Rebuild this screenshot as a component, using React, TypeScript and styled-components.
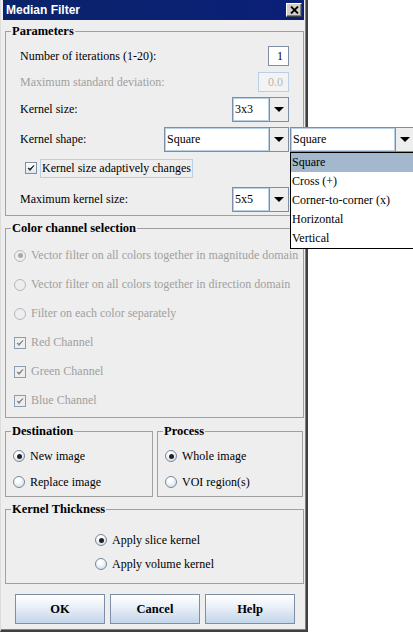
import React from "react";
import styled, { createGlobalStyle } from "styled-components";

const serif = `"Liberation Serif", "Times New Roman", serif`;
const steel = "#7d8fa6";
const paleBlue = "#b8cfe5";
const disabledText = "#a0a0a0";

const GlobalStyle = createGlobalStyle`
  html, body {
    margin: 0;
    padding: 0;
    background: #ffffff;
  }
  body {
    font-family: ${serif};
    font-size: 12px;
    color: #000;
  }
`;

const Page = styled.div`
  width: 413px;
  height: 632px;
  overflow: hidden;
  background: #ffffff;
`;

const Window = styled.div`
  box-sizing: border-box;
  width: 308px;
  height: 632px;
  display: flex;
  flex-direction: column;
  background: #eeeeee;
  border-left: 1px solid #dcdcdc;
  border-right: 2px solid #404040;
  border-bottom: 2px solid #404040;
  box-shadow: inset -1px 0 0 #808080, inset 0 -1px 0 #808080;
`;

const TitleBar = styled.div`
  height: 20px;
  margin: 0 2px 0 2px;
  padding: 0 2px 0 3px;
  display: flex;
  align-items: center;
  justify-content: space-between;
  background: linear-gradient(90deg, #0a246a, #0b1f78);
  color: #fff;
  font: bold 12px "Liberation Sans", Arial, sans-serif;
`;

const CloseButton = styled.div`
  box-sizing: border-box;
  width: 16px;
  height: 14px;
  display: flex;
  align-items: center;
  justify-content: center;
  background: #d4d0c8;
  border: 1px solid;
  border-color: #ffffff #404040 #404040 #ffffff;
  box-shadow: inset -1px -1px 0 #808080;
`;

const Content = styled.div`
  flex: 1;
  display: flex;
  flex-direction: column;
  padding: 4px 2px 0 4px;
`;

const Group = styled.fieldset<{ $mt?: number }>`
  margin: ${(p) => p.$mt ?? 0}px 0 0 0;
  padding: 0;
  min-width: 0;
  border: 1px solid #a0a0a0;
`;

const Legend = styled.legend`
  margin-left: 5px;
  padding: 0 1px;
  font: bold 12.5px ${serif};
  line-height: 14px;
`;

const GroupBody = styled.div<{ $pt: number; $pb: number; $px: number; $center?: boolean }>`
  display: flex;
  flex-direction: column;
  align-items: ${(p) => (p.$center ? "center" : "stretch")};
  padding: ${(p) => p.$pt}px ${(p) => p.$px}px ${(p) => p.$pb}px;
`;

const Row = styled.div<{ $h: number; $mt?: number }>`
  display: flex;
  align-items: center;
  justify-content: space-between;
  height: ${(p) => p.$h}px;
  margin-top: ${(p) => p.$mt ?? 0}px;
`;

const OptionRow = styled.div<{ $h: number }>`
  display: flex;
  align-items: center;
  gap: 5px;
  height: ${(p) => p.$h}px;
`;

const Label = styled.span<{ $disabled?: boolean }>`
  font-size: 12px;
  white-space: nowrap;
  color: ${(p) => (p.$disabled ? disabledText : "#000")};
`;

const Field = styled.div<{ $w: number; $disabled?: boolean }>`
  box-sizing: border-box;
  width: ${(p) => p.$w}px;
  height: 20px;
  display: flex;
  align-items: center;
  justify-content: flex-end;
  padding-right: 5px;
  border: 1px solid ${(p) => (p.$disabled ? paleBlue : steel)};
  background: ${(p) => (p.$disabled ? "#f3f3f3" : "#ffffff")};
  color: ${(p) => (p.$disabled ? "#b4b4b4" : "#000")};
  font-size: 12px;
`;

const ComboWrap = styled.div`
  position: relative;
  display: flex;
`;

const Combo = styled.div<{ $w: number }>`
  box-sizing: border-box;
  width: ${(p) => p.$w}px;
  height: 25px;
  display: flex;
  flex-shrink: 0;
  border: 1px solid ${steel};
  background: #fff;
`;

const ComboValue = styled.div`
  flex: 1;
  display: flex;
  align-items: center;
  padding-left: 1px;
  border: 1px solid ${paleBlue};
  font-size: 12px;
  white-space: nowrap;
  overflow: hidden;
`;

const ComboArrow = styled.div`
  width: 18px;
  display: flex;
  align-items: center;
  justify-content: center;
  background: #eeeeee;
  border-left: 1px solid ${steel};

  &::after {
    content: "";
    border-left: 5px solid transparent;
    border-right: 5px solid transparent;
    border-top: 5px solid #000;
  }
`;

const Popup = styled.div`
  position: absolute;
  top: 0;
  left: calc(100% + 1px);
  display: flex;
  flex-direction: column;
  z-index: 5;
`;

const PopupList = styled.div`
  box-sizing: border-box;
  width: 125px;
  border: 1px solid #000;
  background: #fff;
`;

const PopupItem = styled.div<{ $selected?: boolean }>`
  height: 19px;
  display: flex;
  align-items: center;
  padding-left: 1px;
  font-size: 12px;
  white-space: nowrap;
  background: ${(p) => (p.$selected ? "#a3b8cc" : "transparent")};
`;

const CheckRow = styled.div<{ $h: number; $indent: number; $mt?: number }>`
  display: flex;
  align-items: center;
  gap: 3px;
  height: ${(p) => p.$h}px;
  margin-top: ${(p) => p.$mt ?? 0}px;
  padding-left: ${(p) => p.$indent}px;
`;

const Box = styled.div<{ $disabled?: boolean }>`
  box-sizing: border-box;
  width: 12px;
  height: 12px;
  flex-shrink: 0;
  display: flex;
  align-items: center;
  justify-content: center;
  border: 1px solid ${(p) => (p.$disabled ? "#8d9db0" : steel)};
  background: ${(p) => (p.$disabled ? "#eeeeee" : "linear-gradient(#ffffff, #dde6f0)")};
  color: ${(p) => (p.$disabled ? "#7d8a99" : "#2a2a2a")};
`;

const FocusLabel = styled.span`
  box-sizing: border-box;
  height: 19px;
  display: flex;
  align-items: center;
  padding: 0 1px;
  border: 1px solid ${paleBlue};
  font-size: 12px;
  white-space: nowrap;
`;

const Radio = styled.div<{ $checked?: boolean; $disabled?: boolean }>`
  box-sizing: border-box;
  width: 12px;
  height: 12px;
  border-radius: 50%;
  display: flex;
  align-items: center;
  justify-content: center;
  flex-shrink: 0;
  border: 1px solid ${(p) => (p.$disabled ? "#b0b9c4" : "#7a8799")};
  background: ${(p) =>
    p.$disabled ? "#eeeeee" : "radial-gradient(circle at 40% 30%, #ffffff 20%, #c6d5e6 100%)"};

  &::after {
    content: "";
    display: ${(p) => (p.$checked ? "block" : "none")};
    width: 5px;
    height: 5px;
    border-radius: 50%;
    background: ${(p) => (p.$disabled ? "#a8a8a8" : "#222")};
  }
`;

const SideBySide = styled.div`
  display: flex;
  gap: 4px;
  margin-top: 6px;
`;

const HalfGroup = styled(Group)<{ $w: number }>`
  width: ${(p) => p.$w}px;
  box-sizing: border-box;
`;

const ButtonBar = styled.div`
  display: flex;
  gap: 5px;
  margin: 10px 0 0 10px;
`;

const Button = styled.button`
  box-sizing: border-box;
  width: 90px;
  height: 30px;
  padding: 0;
  border: 1px solid ${steel};
  background: linear-gradient(#ffffff 0%, #eef3f9 35%, #c3d5ea 100%);
  font: bold 12.5px ${serif};
  color: #000;
`;

const Check = () => (
  <svg width="8" height="8" viewBox="0 0 8 8">
    <path d="M1 4 L3 6.5 L7 1.5 L3 5 Z" fill="currentColor" stroke="currentColor" strokeWidth="1" strokeLinejoin="round" />
  </svg>
);

const CloseX = () => (
  <svg width="9" height="8" viewBox="0 0 9 8">
    <path d="M1 0.5 L8 7.5 M8 0.5 L1 7.5" stroke="#000" strokeWidth="1.8" />
  </svg>
);

const shapes = ["Square", "Cross (+)", "Corner-to-corner (x)", "Horizontal", "Vertical"];

const channelOptions: { label: string; kind: "radio" | "check"; on: boolean }[] = [
  { label: "Vector filter on all colors together in magnitude domain", kind: "radio", on: true },
  { label: "Vector filter on all colors together in direction domain", kind: "radio", on: false },
  { label: "Filter on each color separately", kind: "radio", on: false },
  { label: "Red Channel", kind: "check", on: true },
  { label: "Green Channel", kind: "check", on: true },
  { label: "Blue Channel", kind: "check", on: true },
];

export default function App() {
  return (
    <Page>
      <GlobalStyle />
      <Window>
        <TitleBar>
          <span>Median Filter</span>
          <CloseButton>
            <CloseX />
          </CloseButton>
        </TitleBar>
        <Content>
          <Group>
            <Legend>Parameters</Legend>
            <GroupBody $pt={0} $pb={3} $px={14}>
              <Row $h={20} $mt={8}>
                <Label>Number of iterations (1-20):</Label>
                <Field $w={21}>1</Field>
              </Row>
              <Row $h={20} $mt={6}>
                <Label $disabled>Maximum standard deviation:</Label>
                <Field $w={31} $disabled>
                  0.0
                </Field>
              </Row>
              <Row $h={25} $mt={5}>
                <Label>Kernel size:</Label>
                <Combo $w={57}>
                  <ComboValue>3x3</ComboValue>
                  <ComboArrow />
                </Combo>
              </Row>
              <Row $h={25} $mt={5}>
                <Label>Kernel shape:</Label>
                <ComboWrap>
                  <Combo $w={125}>
                    <ComboValue>Square</ComboValue>
                    <ComboArrow />
                  </Combo>
                  <Popup>
                    <Combo $w={125}>
                      <ComboValue>Square</ComboValue>
                      <ComboArrow />
                    </Combo>
                    <PopupList>
                      {shapes.map((s, i) => (
                        <PopupItem key={s} $selected={i === 0}>
                          {s}
                        </PopupItem>
                      ))}
                    </PopupList>
                  </Popup>
                </ComboWrap>
              </Row>
              <CheckRow $h={18} $mt={7} $indent={5}>
                <Box>
                  <Check />
                </Box>
                <FocusLabel>Kernel size adaptively changes</FocusLabel>
              </CheckRow>
              <Row $h={25} $mt={10}>
                <Label>Maximum kernel size:</Label>
                <Combo $w={57}>
                  <ComboValue>5x5</ComboValue>
                  <ComboArrow />
                </Combo>
              </Row>
            </GroupBody>
          </Group>

          <Group $mt={5}>
            <Legend>Color channel selection</Legend>
            <GroupBody $pt={6} $pb={2} $px={8}>
              {channelOptions.map((o) => (
                <OptionRow key={o.label} $h={29}>
                  {o.kind === "radio" ? (
                    <Radio $checked={o.on} $disabled />
                  ) : (
                    <Box $disabled>
                      <Check />
                    </Box>
                  )}
                  <Label $disabled>{o.label}</Label>
                </OptionRow>
              ))}
            </GroupBody>
          </Group>

          <SideBySide>
            <HalfGroup $w={148}>
              <Legend>Destination</Legend>
              <GroupBody $pt={5} $pb={1} $px={7}>
                <OptionRow $h={26}>
                  <Radio $checked />
                  <Label>New image</Label>
                </OptionRow>
                <OptionRow $h={26}>
                  <Radio />
                  <Label>Replace image</Label>
                </OptionRow>
              </GroupBody>
            </HalfGroup>
            <HalfGroup $w={146}>
              <Legend>Process</Legend>
              <GroupBody $pt={5} $pb={1} $px={7}>
                <OptionRow $h={26}>
                  <Radio $checked />
                  <Label>Whole image</Label>
                </OptionRow>
                <OptionRow $h={26}>
                  <Radio />
                  <Label>VOI region(s)</Label>
                </OptionRow>
              </GroupBody>
            </HalfGroup>
          </SideBySide>

          <Group $mt={5}>
            <Legend>Kernel Thickness</Legend>
            <GroupBody $pt={12} $pb={7} $px={0} $center>
              <div>
                <OptionRow $h={24}>
                  <Radio $checked />
                  <Label>Apply slice kernel</Label>
                </OptionRow>
                <OptionRow $h={24}>
                  <Radio />
                  <Label>Apply volume kernel</Label>
                </OptionRow>
              </div>
            </GroupBody>
          </Group>

          <ButtonBar>
            <Button>OK</Button>
            <Button>Cancel</Button>
            <Button>Help</Button>
          </ButtonBar>
        </Content>
      </Window>
    </Page>
  );
}
